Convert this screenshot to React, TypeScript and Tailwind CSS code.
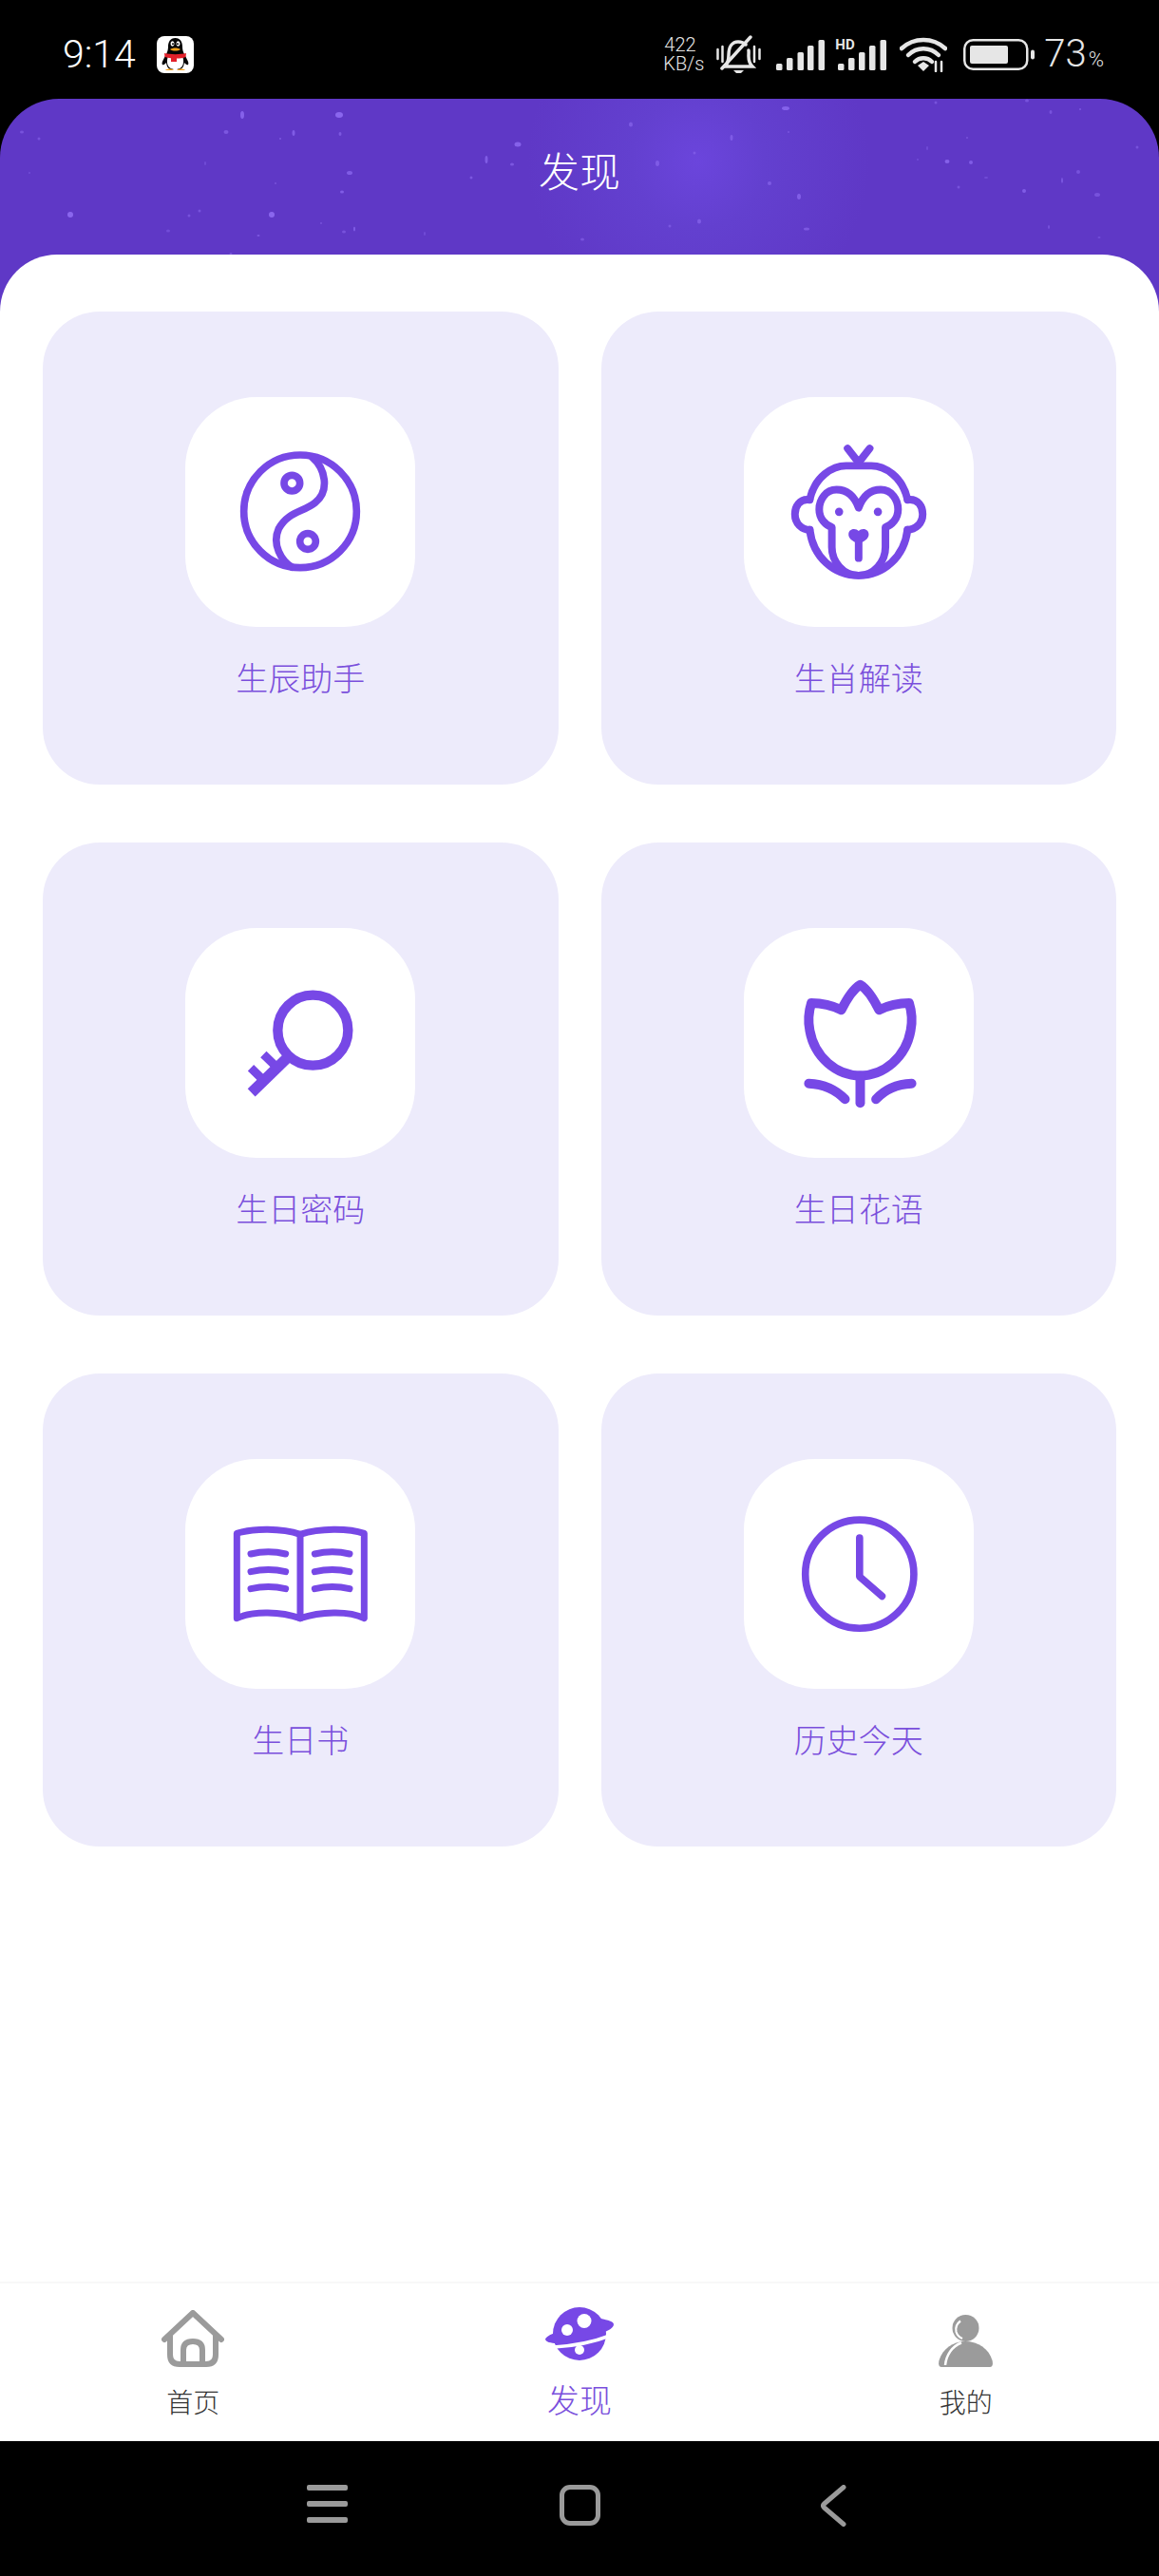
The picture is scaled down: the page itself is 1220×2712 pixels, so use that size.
import React from "react";

const P = "#7748e6";

const stars: [number, number, number, number, number][] = [
  [255,121,2,4,0.8],[357,121,4,3,0.9],[238,139,2.5,2,0.6],[309,140,1.5,3,0.7],[358,141,1.5,2,0.6],[295,146,1,1,0.6],[23,139,2,1.5,0.5],[41,146,1.5,1.5,0.5],
  [545,152,3.5,2.5,0.8],[512,168,1.5,4,0.7],[539,173,2,1.5,0.6],[368,182,3,2,0.7],[360,202,2,1.5,0.7],[74,226,3,3,0.9],[286,226,3,3,0.9],[210,222,1.5,1.5,0.5],
  [199,227,1.5,1.5,0.5],[177,243,2,1.5,0.4],[373,241,1,2.5,0.7],[362,244,2,1.5,0.5],[272,248,1.5,1,0.6],[216,172,1,2,0.4],[31,182,1,1,0.4],[496,187,1.5,1.5,0.6],
  [290,193,1,1,0.5],[338,235,1,1,0.5],[447,246,1,2,0.4],[243,267,1.5,1,0.5],[827,114,4,2,0.8],[664,131,2,2.5,0.6],[770,145,1.5,3,0.6],[692,172,2,3,0.6],
  [731,161,1.5,1.5,0.5],[810,193,2,2,0.6],[841,207,2,3,0.7],[736,233,2,2.5,0.6],[849,241,3,1.5,0.6],[997,170,2.5,2,0.8],[1022,171,2,2,0.7],[1118,190,1,3,0.6],
  [1078,201,2,2,0.7],[1155,205,3,2,0.5],[1135,181,2,2,0.5],[1104,239,1,2,0.5],[705,238,1.5,1.5,0.5],[613,252,2,1.5,0.5],[1081,106,2,1.5,0.5],[1106,118,1.5,2,0.5],
  [1137,115,1,1,0.6],[1018,145,1,1,0.5],[976,156,1,2,0.4],[966,168,1,1,0.4],[1038,187,2,1,0.4],[1009,197,1.5,1.5,0.5],[985,108,1.5,1.5,0.5],[1197,155,1.5,1.5,0.5],
  [1157,250,1.5,1,0.4],[830,139,1,1,0.5],
];

function Yin() {
  return (
    <svg viewBox="15 24 726 726" className="h-full w-full" fill="none" stroke={P} strokeWidth="23" strokeLinecap="round">
      <circle cx="378" cy="385" r="178" />
      <path d="M415 213C458 250 472 320 425 358C388 388 340 385 310 440C288 490 318 540 352 562" />
      <circle cx="352" cy="296" r="25" />
      <circle cx="402" cy="480" r="25" />
    </svg>
  );
}

function Monkey() {
  return (
    <svg viewBox="36 24 729 729" className="h-full w-full" fill="none" stroke={P} strokeWidth="24" strokeLinecap="round" strokeLinejoin="round">
      <path d="M365 187L400 232L435 187" />
      <path d="M245 348C262 275 318 242 360 242H440C482 242 538 275 555 348" />
      <path d="M245 350C212 345 198 372 198 395C198 425 220 445 245 445" />
      <path d="M555 350C590 345 603 372 603 395C603 425 580 445 555 445" />
      <path d="M245 445C255 530 320 590 400 590C480 590 545 530 555 445" />
      <path d="M400 375C385 335 360 318 330 318C295 318 275 350 275 380C275 410 295 430 315 437V500C315 545 350 590 400 590C450 590 485 545 485 500V437C505 430 525 410 525 380C525 350 505 318 470 318C440 318 415 335 400 375Z" />
      <circle cx="338" cy="388" r="13" fill={P} stroke="none" />
      <circle cx="461" cy="388" r="13" fill={P} stroke="none" />
      <path d="M368 458C370 440 392 440 400 449C408 440 430 440 432 458C434 475 412 485 400 490C388 485 366 475 368 458Z" fill={P} stroke="none" />
      <path d="M400 480V535" />
    </svg>
  );
}

function Key() {
  return (
    <svg viewBox="15 20 726 726" className="h-full w-full" fill="none" stroke={P}>
      <circle cx="418" cy="343" r="111" strokeWidth="31" />
      <path d="M335 432L224 540" strokeWidth="34" />
      <path d="M222 462L258 497M262 419L300 456" strokeWidth="27" />
    </svg>
  );
}

function Tulip() {
  return (
    <svg viewBox="36 20 729 729" className="h-full w-full" fill="none" stroke={P} strokeWidth="30" strokeLinecap="round" strokeLinejoin="round">
      <path d="M405 200C380 215 360 250 345 280C315 265 280 258 250 258C240 290 240 320 245 345C260 430 330 488 405 488C480 488 550 430 565 345C570 320 570 290 560 258C530 258 495 265 465 280C450 250 430 215 405 200Z" />
      <path d="M405 488V575" />
      <path d="M242 513C290 515 330 535 357 563M568 513C520 515 480 535 455 563" />
    </svg>
  );
}

function Book() {
  return (
    <svg viewBox="15 17 726 726" className="h-full w-full" fill="none" stroke={P} strokeWidth="21" strokeLinecap="round" strokeLinejoin="round">
      <path d="M378 255C320 235 230 235 178 252V520C230 495 320 500 378 520C440 500 530 495 580 520V252C530 235 440 235 378 255Z" />
      <path d="M378 255V520" />
      <path d="M222 317C260 308 295 308 332 317M222 373C260 364 295 364 332 373M222 427C260 418 295 418 332 427M424 317C462 308 497 308 534 317M424 373C462 364 497 364 534 373M424 427C462 418 497 418 534 427" />
    </svg>
  );
}

function Clock() {
  return (
    <svg viewBox="36 17 729 729" className="h-full w-full" fill="none" stroke={P} strokeWidth="23" strokeLinecap="round" strokeLinejoin="round">
      <circle cx="403" cy="382" r="172" />
      <path d="M403 267V390L474 452" />
    </svg>
  );
}

function Card({ label, icon }: { label: string; icon: React.ReactNode }) {
  return (
    <div className="flex h-[498px] flex-col items-center rounded-[60px] bg-[#edebfb] pt-[90px]">
      <div className="h-[242px] w-[242px] rounded-[75px] bg-white">{icon}</div>
      <div className="mt-[31px] text-[34px] font-light leading-[44px] text-[#7a4fdc]">{label}</div>
    </div>
  );
}

function Penguin() {
  return (
    <svg viewBox="0 0 39 39" className="ml-[21px] h-[39px] w-[39px]">
      <rect width="39" height="39" rx="8" fill="#fff" />
      <path d="M19.5 2C14 2 12 6.5 12 11C12 14 11.5 16 10 19C7.5 24 4.5 28 6 30C7 31 9 29 10 28C10.500 32 12 34 14 35H25C27 34 28.500 32 29 28C30 29 32 31 33 30C34.500 28 31.500 24 29 19C27.500 16 27 14 27 11C27 6.500 25 2 19.500 2Z" fill="#050505" />
      <path d="M12 21C10 26 10 35 19.500 35C29 35 29 26 27 21Z" fill="#fff" />
      <ellipse cx="16.500" cy="8" rx="2" ry="2.700" fill="#fff" />
      <ellipse cx="22.500" cy="8" rx="2" ry="2.700" fill="#fff" />
      <circle cx="17" cy="8.300" r="1" fill="#000" />
      <circle cx="22" cy="8.300" r="1" fill="#000" />
      <path d="M14 14C17 12 22 12 25 14C22 16 17 16 14 14Z" fill="#f5a21b" />
      <path d="M8 18C14 19.500 25 19.500 31 18L30.500 22C28 23 24 23.500 21 23.500L21 27L15 27L15 23.300C13 23 10.500 22.500 8.500 22Z" fill="#e3202a" />
      <path d="M9 36C11 34 16 34 18 36ZM21 36C23 34 28 34 30 36Z" fill="#f5a21b" />
    </svg>
  );
}

function Bars({ x }: { x: number[] }) {
  const h = [7, 13, 19, 26, 32];
  return (
    <>
      {x.map((v, i) => (
        <rect key={i} x={v} y={33 - h[i]} width="6.500" height={h[i]} rx="1.500" fill="#e6e6e6" />
      ))}
    </>
  );
}

function StatusRight() {
  return (
    <div className="flex items-center pr-[58px] text-[#e6e6e6]">
      <div className="w-[43px] font-['Roboto',sans-serif] text-[20px] font-light leading-[20px]">
        <div className="pl-px">422</div>
        <div className="whitespace-nowrap">KB/s</div>
      </div>
      <svg viewBox="0 0 47 40" className="ml-[13px] h-[40px] w-[47px]" fill="none" stroke="#e6e6e6" strokeLinecap="round" strokeWidth="3">
        <path d="M1.500 15V25M6.500 12V28M40 12V28M45.500 15V25" strokeWidth="2.500" />
        <path d="M9 33C12 30 13 27 13 21C13 12 17 7 23 7C26 7 29 8 31 10M34 16C34.300 18 34 20 34 22C34 27 35 30 38 33H9" strokeWidth="3.500" />
        <path d="M36 2L6 35" strokeWidth="3.500" />
        <path d="M18 37H29L26 40H21Z" fill="#e6e6e6" stroke="none" />
      </svg>
      <svg viewBox="0 0 51 33" className="ml-[16px] h-[33px] w-[51px]">
        <Bars x={[0, 11, 22.500, 33, 44.500]} />
      </svg>
      <div className="relative ml-[11px] h-[33px] w-[54px]">
        <span className="absolute -top-[3px] left-0 font-['Roboto',sans-serif] text-[15px] font-bold leading-[18px]">HD</span>
        <svg viewBox="0 0 54 33" className="h-[33px] w-[54px]">
          <Bars x={[3, 14, 25, 36, 47.500]} />
        </svg>
      </div>
      <svg viewBox="0 0 50 38" className="ml-[14px] h-[38px] w-[50px]" fill="none" stroke="#e6e6e6" strokeWidth="4.500" strokeLinecap="round">
        <path d="M2 13C15 1 35 1 48 13" />
        <path d="M9 20C18 11 32 11 41 20" />
        <path d="M16 27C21 22 29 22 34 27" />
        <path d="M19 31L25 27L31 31L25 37Z" fill="#e6e6e6" stroke="none" />
        <path d="M38 27V37M44 27V37" strokeWidth="2.500" />
      </svg>
      <svg viewBox="0 0 75 33" className="ml-[17px] h-[33px] w-[75px]">
        <rect x="1.250" y="1.250" width="66" height="30.500" rx="9" fill="none" stroke="#e6e6e6" strokeWidth="2.500" />
        <rect x="7" y="7" width="40" height="19" rx="2" fill="#e6e6e6" />
        <rect x="71" y="11.500" width="4" height="10" rx="2" fill="#e6e6e6" />
      </svg>
      <div className="ml-[10px] mt-[6px] flex items-baseline font-['Roboto',sans-serif] font-light">
        <span className="text-[40px] leading-[44px]">73</span>
        <span className="ml-[2px] text-[22px] leading-[44px]">%</span>
      </div>
    </div>
  );
}

function Home() {
  return (
    <svg viewBox="0 0 66 60" className="h-[60px] w-[66px]" fill="none" stroke="#9b9b9b" strokeWidth="6" strokeLinecap="round" strokeLinejoin="round">
      <path d="M3 31L33 3L63 31" />
      <path d="M9 27V47Q9 57 19 57H47Q57 57 57 47V27" />
      <path d="M23 57V42Q23 33 33 33Q43 33 43 42V57" />
    </svg>
  );
}

function Planet() {
  return (
    <svg viewBox="0 0 72 56" className="h-[56px] w-[72px]">
      <circle cx="36" cy="28" r="28" fill={P} />
      <path d="M0 33.500C2 30 7 28 12 26.500L12 38C6 38 0 36.500 0 33.500ZM58 12C66 13.500 72 15 72 18C72 22 66 25 60 27Z" fill={P} />
      <path d="M9 42C26 41 50 37 68 30" fill="none" stroke="#fff" strokeWidth="3.500" />
      <circle cx="41" cy="14.500" r="7.500" fill="#fff" />
      <circle cx="23" cy="24" r="6" fill="#fff" />
      <circle cx="36" cy="45" r="5" fill="#fff" />
    </svg>
  );
}

function Person() {
  return (
    <svg viewBox="0 0 57 55" className="h-[55px] w-[57px]">
      <circle cx="28.500" cy="14" r="14" fill="#9b9b9b" />
      <path d="M23 6.500Q17 11 18.500 18Q20 23 25 25" fill="none" stroke="#fff" strokeWidth="2.200" />
      <path d="M3 55Q-1 55 0.500 48C4 36 15 28 28 28C42 28 53 36 56.500 48Q58 55 54 55Z" fill="#9b9b9b" />
      <path d="M7 53C8 43 14 33 24 29.500" fill="none" stroke="#fff" strokeWidth="2.500" />
    </svg>
  );
}

export default function App() {
  return (
    <div className="flex h-[2712px] w-[1220px] flex-col overflow-hidden bg-black font-['Noto_Sans_CJK_SC',sans-serif]">
      <div className="flex h-[104px] items-center justify-between pt-[10px] text-white">
        <div className="flex items-center pl-[66px]">
          <span className="w-[78px] font-['Roboto',sans-serif] text-[41px] font-light leading-[44px]">9:14</span>
          <Penguin />
        </div>
        <StatusRight />
      </div>

      <div className="relative flex h-[226px] shrink-0 justify-center overflow-hidden rounded-t-[62px] bg-[#5f38c6] bg-[radial-gradient(circle_at_735px_66px,#6b45dc_0,#6340cf_70px,transparent_180px)]">
        <svg viewBox="0 104 1220 226" className="absolute inset-0 h-full w-full">
          {stars.map((s, i) => (
            <ellipse key={i} cx={s[0]} cy={s[1]} rx={s[2]} ry={s[3]} fill="#8f6cf2" opacity={s[4]} />
          ))}
        </svg>
        <div className="relative mt-[44px] text-[43px] font-light leading-[60px] text-white">发现</div>
      </div>

      <div className="relative -mt-[62px] flex flex-1 flex-col rounded-t-[60px] bg-white px-[45px] pt-[60px]">
        <div className="grid grid-cols-2 gap-x-[45px] gap-y-[61px]">
          <Card label="生辰助手" icon={<Yin />} />
          <Card label="生肖解读" icon={<Monkey />} />
          <Card label="生日密码" icon={<Key />} />
          <Card label="生日花语" icon={<Tulip />} />
          <Card label="生日书" icon={<Book />} />
          <Card label="历史今天" icon={<Clock />} />
        </div>
      </div>

      <div className="grid h-[168px] shrink-0 grid-cols-3 border-t-2 border-[#f8f8f8] bg-white shadow-[0_-4px_6px_rgba(0,0,0,0.015)]">
        <div className="flex flex-col items-center pt-[28px]">
          <Home />
          <div className="mt-[16px] text-[28px] font-light leading-[40px] text-[#333]">首页</div>
        </div>
        <div className="flex flex-col items-center pt-[25px]">
          <Planet />
          <div className="mt-[19px] text-[34px] font-light leading-[44px] text-[#7a4fdc]">发现</div>
        </div>
        <div className="flex flex-col items-center pt-[33px]">
          <Person />
          <div className="mt-[16px] text-[28px] font-light leading-[40px] text-[#333]">我的</div>
        </div>
      </div>

      <div className="flex h-[142px] shrink-0 items-start bg-black pl-[323px] pt-[46px]">
        <div className="flex h-[40px] w-[43px] flex-col justify-between">
          <div className="h-[6px] rounded-[2px] bg-[#9a9a9a]" />
          <div className="h-[6px] rounded-[2px] bg-[#9a9a9a]" />
          <div className="h-[6px] rounded-[2px] bg-[#9a9a9a]" />
        </div>
        <div className="ml-[223px] h-[43px] w-[43px] rounded-[11px] border-[5px] border-[#9a9a9a]" />
        <svg viewBox="0 0 27 44" className="ml-[232px] h-[44px] w-[27px]" fill="none" stroke="#9a9a9a" strokeWidth="5" strokeLinecap="round" strokeLinejoin="round">
          <path d="M24 2.500L3.500 20Q1.500 22 3.500 24L24 41.500" />
        </svg>
      </div>
    </div>
  );
}
